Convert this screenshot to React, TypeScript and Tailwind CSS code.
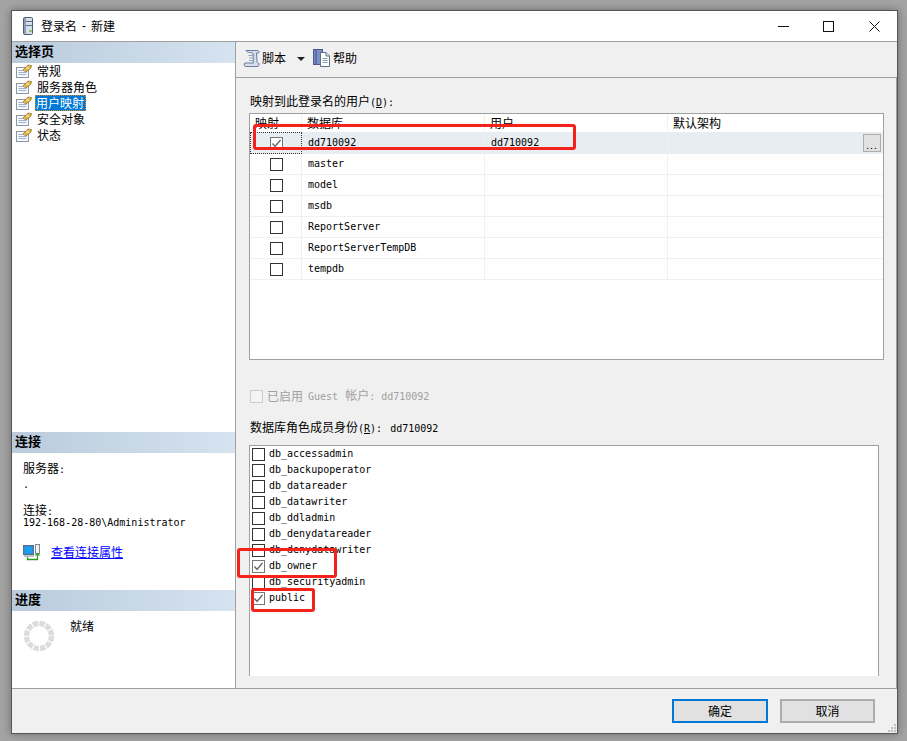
import React from "react";

const M = ({ children }: { children: React.ReactNode }) => (
  <span className="[font-family:'DejaVu_Sans_Mono',monospace] text-[10px]">{children}</span>
);

const Check = ({ checked = false, muted = false, disabled = false }: { checked?: boolean; muted?: boolean; disabled?: boolean }) => (
  <span
    className={`flex h-[13px] w-[13px] shrink-0 items-center justify-center border ${
      disabled ? "border-[#cccccc] bg-[#f4f4f4]" : muted ? "border-[#777777] bg-white" : "border-[#333333] bg-white"
    }`}
  >
    {checked && (
      <svg width="11" height="11" viewBox="0 0 11 11">
        <path d="M1.5 5.5 L4 8.5 L9.5 2" fill="none" stroke="#666666" strokeWidth="1.4" />
      </svg>
    )}
  </span>
);

const PageIcon = () => (
  <svg width="16" height="14" viewBox="0 0 16 14" className="shrink-0">
    <rect x="0.5" y="3.5" width="12" height="10" fill="#f6f8fb" stroke="#8b97a8" />
    <path d="M2.5 6.5h5M2.5 8.5h8M2.5 10.5h8" stroke="#9fb3cc" />
    <path d="M7 6 L12 1 L15.5 1.5 L15 4 L10 8 Z" fill="#e9b73a" stroke="#6c5a20" strokeWidth="0.6" />
    <path d="M10 3 L13 5" stroke="#fff3b8" />
  </svg>
);

const ScrollIcon = () => (
  <svg width="18" height="19" viewBox="0 0 18 19" className="shrink-0">
    <path
      d="M3 1.5 H14.5 C16 1.5 16.5 3 15.5 4 H13.5 L14 12.5 C14.3 14 15 14.5 16 14.5 C16.5 16.5 15.5 17.5 14 17.5 H3 C1 17.5 0.5 15 2 14 H10.5 L10 4.5 C9.5 3 4 4.5 3 1.5 Z"
      fill="#d5dfed"
      stroke="#6a7d99"
    />
    <path d="M5.5 6.5h6M6 9h5.5M6 11.5h5" stroke="#8fa3bf" />
  </svg>
);

const HelpIcon = () => (
  <svg width="18" height="18" viewBox="0 0 18 18" className="shrink-0">
    <rect x="0.5" y="0.5" width="9" height="15" fill="#7b8fc4" stroke="#4c5a91" />
    <rect x="2" y="1" width="2" height="14" fill="#5c6ea8" />
    <path d="M7.5 3.5 H13 L16.5 7 V17.5 H7.5 Z" fill="#ffffff" stroke="#5f6f85" />
    <path d="M13 3.5 V7 H16.5" fill="#dfe6f0" stroke="#5f6f85" />
    <path d="M9.5 9.5h5M9.5 11.5h5M9.5 13.5h5" stroke="#8a99ad" />
  </svg>
);

const ConnIcon = () => (
  <svg width="18" height="17" viewBox="0 0 18 17" className="shrink-0">
    <rect x="0.5" y="1.5" width="10" height="9" fill="#2f8be0" stroke="#5a6b82" />
    <rect x="2" y="3" width="7" height="6" fill="#1aa0ee" />
    <rect x="1" y="11" width="10" height="2" fill="#b9c3d0" />
    <rect x="12.5" y="0.5" width="4" height="9" fill="#eef1f5" stroke="#7d8896" />
    <path d="M4.5 13 V15.5 H14.5 V10.5" fill="none" stroke="#2c9a1e" strokeWidth="1.3" />
    <path d="M12.5 11.5 L14.5 9.5 L16.5 11.5" fill="none" stroke="#2c9a1e" strokeWidth="1.2" />
  </svg>
);

const DbIcon = () => (
  <svg width="10" height="18" viewBox="0 0 10 18" className="shrink-0">
    <rect x="0.5" y="0.5" width="9" height="17" rx="1" fill="#d8dee8" stroke="#4c5a72" />
    <rect x="1" y="1" width="2" height="16" fill="#8f9db5" />
    <path d="M3 4.5h6M3 8.5h6" stroke="#5b6a86" />
    <rect x="6.5" y="13" width="2" height="2" fill="#72b84a" />
  </svg>
);

const Spinner = () => (
  <svg width="32" height="32" viewBox="0 0 32 32" className="shrink-0">
    <circle cx="16" cy="16" r="12.5" fill="none" stroke="#dcdcdc" strokeWidth="5.4" strokeDasharray="5.3 1.25" />
  </svg>
);

const PanelHead = ({ children }: { children: React.ReactNode }) => (
  <div className="flex h-[21px] shrink-0 items-center bg-gradient-to-r from-[#b9cbdc] to-[#d6e3f0] pb-[3px] pl-[3px] text-[13px] font-bold text-black">
    {children}
  </div>
);

const navItems = ["常规", "服务器角色", "用户映射", "安全对象", "状态"];
const dbs = ["master", "model", "msdb", "ReportServer", "ReportServerTempDB", "tempdb"];
const roles: [string, boolean][] = [
  ["db_accessadmin", false],
  ["db_backupoperator", false],
  ["db_datareader", false],
  ["db_datawriter", false],
  ["db_ddladmin", false],
  ["db_denydatareader", false],
  ["db_denydatawriter", false],
  ["db_owner", true],
  ["db_securityadmin", false],
  ["public", true],
];

const cols = "grid grid-cols-[52px_183px_183px_1fr]";
const cell = "flex items-center border-r border-b border-[#f0f0f0] pl-[6px]";

export default function App() {
  return (
    <div className="relative h-[741px] w-[907px] overflow-hidden bg-[#a3a3a3] pl-[11px] pt-[10px] text-[12px] leading-4 text-black [font-family:'Noto_Sans_CJK_SC',sans-serif]">
      <div className="flex h-[724px] w-[887px] flex-col border border-[#555555] bg-[#f0f0f0] shadow-[0_0_8px_rgba(0,0,0,0.35)]">
        {/* title bar */}
        <div className="flex h-[31px] shrink-0 items-center border-b border-[#a0a0a0] bg-white pl-[11px]">
          <DbIcon />
          <span className="ml-[8px] flex">
            <span>登录名</span>
            <span className="mx-[5px] [font-family:'Liberation_Sans',sans-serif]">-</span>
            <span>新建</span>
          </span>
          <div className="ml-auto flex items-center pr-[17px]">
            <svg width="11" height="11" viewBox="0 0 11 11" className="mr-[34px]">
              <path d="M0 5.5h11" stroke="#111" />
            </svg>
            <svg width="11" height="11" viewBox="0 0 11 11" className="mr-[35px]">
              <rect x="0.5" y="0.5" width="10" height="10" fill="none" stroke="#111" />
            </svg>
            <svg width="11" height="11" viewBox="0 0 11 11">
              <path d="M0.5 0.5 L10.5 10.5 M10.5 0.5 L0.5 10.5" stroke="#111" />
            </svg>
          </div>
        </div>

        {/* main */}
        <div className="flex h-[647px] shrink-0 border-b border-[#a0a0a0]">
          {/* left */}
          <div className="flex w-[224px] shrink-0 flex-col border-r border-[#a0a0a0] bg-white">
            <PanelHead>选择页</PanelHead>
            <div className="flex h-[369px] shrink-0 flex-col pl-[4px]">
              {navItems.map((n, i) => (
                <div key={n} className="flex h-4 items-center">
                  <PageIcon />
                  <span
                    className={
                      i === 2
                        ? "ml-[3px] h-4 border border-dotted border-[#e08a20] bg-[#0078d7] pr-[1px] leading-[14px] text-white"
                        : "ml-[5px]"
                    }
                  >
                    {n}
                  </span>
                </div>
              ))}
            </div>
            <PanelHead>连接</PanelHead>
            <div className="flex h-[137px] shrink-0 flex-col pl-[11px] pt-[7px]">
              <div className="h-4">服务器<M>:</M></div>
              <div className="h-[13px] leading-[13px]"><M>.</M></div>
              <div className="mt-[15px] h-[11px] leading-[12px]">连接<M>:</M></div>
              <div className="h-[12px] leading-[12px]"><M>192-168-28-80\Administrator</M></div>
              <div className="mt-[17px] flex h-4 items-center">
                <ConnIcon />
                <span className="ml-[10px] text-[#0000ff] underline">查看连接属性</span>
              </div>
            </div>
            <PanelHead>进度</PanelHead>
            <div className="flex flex-1 pl-[11px] pt-[9px]">
              <Spinner />
              <span className="ml-[15px] mt-[-2px]">就绪</span>
            </div>
          </div>

          {/* right */}
          <div className="flex min-w-0 flex-1 flex-col">
            <div className="flex h-[36px] shrink-0 items-center border-b border-[#a0a0a0] pb-[3px] pl-[7px]">
              <ScrollIcon />
              <span className="ml-[1px]">脚本</span>
              <svg width="8" height="4" viewBox="0 0 8 4" className="ml-[11px] mt-[1px]">
                <path d="M0 0 H8 L4 4 Z" fill="#222" />
              </svg>
              <span className="ml-[8px] flex items-center">
                <HelpIcon />
                <span className="ml-[2px]">帮助</span>
              </span>
            </div>
            <div className="flex flex-1 flex-col border-r border-[#a0a0a0] pl-[13px] pt-[15px]">
              <div className="ml-[1px] h-4">
                映射到此登录名的用户<M>(<span className="underline">D</span>):</M>
              </div>
              <div className="mt-[4px] h-[247px] w-[635px] shrink-0 border border-[#a0a0a0] bg-white">
                <div className={`${cols} h-[18px]`}>
                  <div className="border-r border-[#f0f0f0] pl-[5px] leading-[18px]">映射</div>
                  <div className="border-r border-[#f0f0f0] pl-[5px] leading-[18px]">数据库</div>
                  <div className="border-r border-[#f0f0f0] pl-[5px] leading-[18px]">用户</div>
                  <div className="pl-[5px] leading-[18px]">默认架构</div>
                </div>
                <div className={`${cols} h-[22px] bg-[#e8edf2]`}>
                  <div className="flex items-center justify-center border border-dotted border-[#333333] pl-[1px]">
                    <Check checked muted />
                  </div>
                  <div className={`${cell} border-b-[#e8edf2]`}><M>dd710092</M></div>
                  <div className={`${cell} border-b-[#e8edf2]`}><M>dd710092</M></div>
                  <div className="flex items-center justify-end pr-[2px]">
                    <span className="flex h-[18px] w-[18px] items-end justify-center border border-[#adadad] bg-[#e1e1e1] text-[10px] leading-[12px] tracking-[1px]">
                      ...
                    </span>
                  </div>
                </div>
                {dbs.map((d) => (
                  <div key={d} className={`${cols} h-[21px]`}>
                    <div className="flex items-center justify-center border-r border-b border-[#f0f0f0] pl-[1px]">
                      <Check />
                    </div>
                    <div className={cell}><M>{d}</M></div>
                    <div className={cell} />
                    <div className="border-b border-[#f0f0f0]" />
                  </div>
                ))}
              </div>
              <div className="mt-[28px] flex h-4 items-center text-[#a0a0a0]">
                <span className="ml-[1px]"><Check disabled /></span>
                <span className="ml-[4px]">已启用</span>
                <span className="ml-[5px]"><M>Guest</M></span>
                <span className="ml-[7px]">帐户<M>:</M></span>
                <span className="ml-[6px]"><M>dd710092</M></span>
              </div>
              <div className="ml-[1px] mt-[16px] flex h-4 items-center">
                <span>数据库角色成员身份<M>(<span className="underline">R</span>):</M></span>
                <span className="ml-[8px]"><M>dd710092</M></span>
              </div>
              <div className="mt-[9px] flex h-[231px] w-[630px] shrink-0 flex-col border-x border-t border-[#a0a0a0] bg-white pl-[2px]">
                {roles.map(([r, c]) => (
                  <div key={r} className="flex h-4 shrink-0 items-center">
                    <Check checked={c} muted={c} />
                    <span className="ml-[4px] mt-[-2px]"><M>{r}</M></span>
                  </div>
                ))}
              </div>
            </div>
          </div>
        </div>

        {/* footer */}
        <div className="relative flex flex-1 items-start justify-end gap-[12px] pr-[22px] pt-[10px]">
          <button className="h-[24px] w-[96px] border-2 border-[#0078d7] bg-[#e1e1e1] text-[12px] leading-4">确定</button>
          <button className="h-[24px] w-[95px] border-2 border-[#adadad] bg-[#e1e1e1] text-[12px] leading-4">取消</button>
          <svg width="8" height="8" viewBox="0 0 8 8" className="absolute bottom-[1px] right-[1px]">
            <path d="M6 0h2v2H6zM3 3h2v2H3zM6 3h2v2H6zM0 6h2v2H0zM3 6h2v2H3zM6 6h2v2H6z" fill="#bdbdbd" />
          </svg>
        </div>
      </div>

      {/* red annotations */}
      <div className="absolute left-[253px] top-[124px] h-[26px] w-[323px] rounded-[3px] border-[3px] border-[#f5221b]" />
      <div className="absolute left-[237px] top-[548px] h-[30px] w-[100px] rounded-[3px] border-[3px] border-[#f5221b]" />
      <div className="absolute left-[251px] top-[588px] h-[24px] w-[64px] rounded-[3px] border-[3px] border-[#f5221b]" />
    </div>
  );
}
